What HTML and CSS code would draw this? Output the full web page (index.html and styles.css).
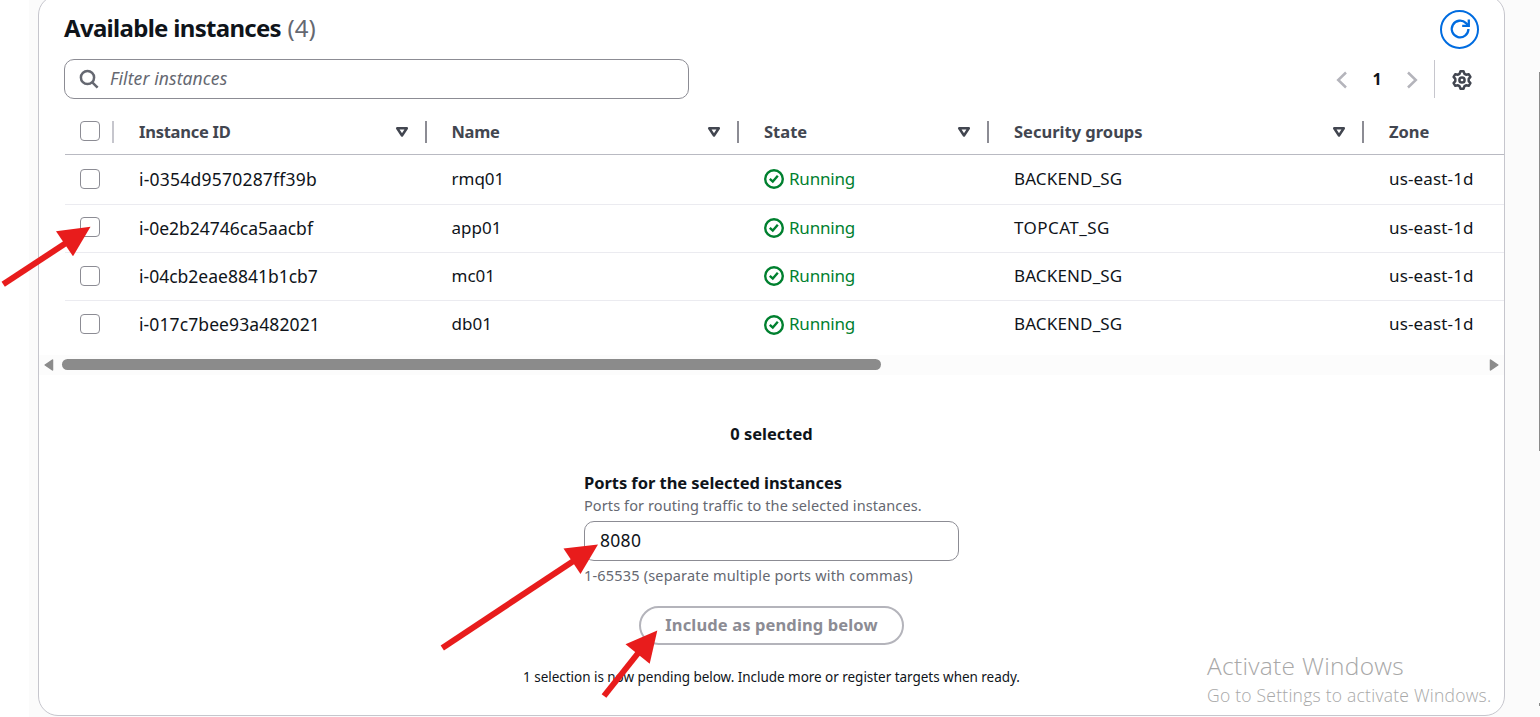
FILE: index.html
```html
<!DOCTYPE html>
<html lang="en">
<head>
<meta charset="utf-8">
<title>Available instances</title>
<link rel="stylesheet" href="styles.css">
</head>
<body>
<svg width="0" height="0" class="defs">
  <symbol id="sort" viewBox="0 0 14 12"><path d="M2.200 2.200h9.600L7 9.500z" fill="none" stroke="#424650" stroke-width="2.500" stroke-linejoin="round"/></symbol>
  <symbol id="ok" viewBox="0 0 20 20"><circle cx="10" cy="10" r="8.800" fill="none" stroke="#00802f" stroke-width="2.400"/><path d="M5.800 9.800l3 2.800 5-5.800" fill="none" stroke="#00802f" stroke-width="2.400"/></symbol>
</svg>
<div class="page">
  <main class="panel">
    <header class="head">
      <h2 class="title"><span class="title-text">Available instances</span> <span class="count">(4)</span></h2>
      <button class="refresh" aria-label="Refresh"><svg width="24" height="24" viewBox="0 0 24 24" fill="none" stroke="#006ce0" stroke-width="2.400"><path d="M21.300 11.500a8.700 8.700 0 1 1-2.500-6.100L21.500 8"/><path d="M21.700 1.500v6.700h-6.900"/></svg></button>
    </header>
    <div class="tools">
      <div class="filter">
        <svg width="20" height="20" viewBox="0 0 20 20" fill="none" stroke="#656871" stroke-width="2.500"><circle cx="8.500" cy="8.500" r="6.600"/><path d="M13.300 13.300l5.300 5.300"/></svg>
        <span class="placeholder">Filter instances</span>
      </div>
      <div class="pager">
        <svg width="12" height="18" viewBox="0 0 12 18" fill="none" stroke="#b4b4bb" stroke-width="2.500"><path d="M10 1.500L2.200 9l7.800 7.500"/></svg>
        <b class="pageno">1</b>
        <svg width="12" height="18" viewBox="0 0 12 18" fill="none" stroke="#b4b4bb" stroke-width="2.500"><path d="M2 1.500L9.800 9 2 16.500"/></svg>
      </div>
      <div class="prefs"><svg width="22" height="22" viewBox="0 0 22 22" fill="none" stroke="#424650" stroke-width="2.500" stroke-linejoin="round"><path d="M9.500 2.200h3l1 2.700 1.500.8 2.700-.5 1.700 2.700-1.700 2v2.200l1.700 2-1.700 2.700-2.700-.5-1.500.8-1 2.700h-3l-1-2.700-1.500-.8-2.700.5-1.700-2.700 1.700-2V9.900l-1.700-2 1.700-2.700 2.700.5 1.500-.8z"/><circle cx="11" cy="11" r="2.600"/></svg></div>
    </div>
    <div class="table">
      <div class="row header">
        <div class="cell check"><i class="box"></i></div>
        <div class="cell"><span class="h-id">Instance ID</span><svg class="sort"><use href="#sort"/></svg></div>
        <div class="cell"><span class="h-name">Name</span><svg class="sort"><use href="#sort"/></svg></div>
        <div class="cell"><span>State</span><svg class="sort"><use href="#sort"/></svg></div>
        <div class="cell"><span>Security groups</span><svg class="sort"><use href="#sort"/></svg></div>
        <div class="cell last"><span>Zone</span></div>
      </div>
      <div class="row first">
        <div class="cell check"><i class="box"></i></div><div class="cell id">i-0354d9570287ff39b</div><div class="cell">rmq01</div>
        <div class="cell state"><svg class="ok"><use href="#ok"/></svg>Running</div><div class="cell sg">BACKEND_SG</div><div class="cell zone">us-east-1d</div>
      </div>
      <div class="row second">
        <div class="cell check"><i class="box"></i></div><div class="cell id tight">i-0e2b24746ca5aacbf</div><div class="cell">app01</div>
        <div class="cell state"><svg class="ok"><use href="#ok"/></svg>Running</div><div class="cell sg wide">TOPCAT_SG</div><div class="cell zone">us-east-1d</div>
      </div>
      <div class="row">
        <div class="cell check"><i class="box"></i></div><div class="cell id tight">i-04cb2eae8841b1cb7</div><div class="cell">mc01</div>
        <div class="cell state"><svg class="ok"><use href="#ok"/></svg>Running</div><div class="cell sg">BACKEND_SG</div><div class="cell zone">us-east-1d</div>
      </div>
      <div class="row end">
        <div class="cell check"><i class="box"></i></div><div class="cell id snug">i-017c7bee93a482021</div><div class="cell">db01</div>
        <div class="cell state"><svg class="ok"><use href="#ok"/></svg>Running</div><div class="cell sg">BACKEND_SG</div><div class="cell zone">us-east-1d</div>
      </div>
    </div>
    <div class="scroll">
      <svg width="10" height="12" viewBox="0 0 10 12"><path d="M8.500 1v10L1.200 6z" fill="#8b8b8b" stroke="#8b8b8b" stroke-width="1.500" stroke-linejoin="round"/></svg>
      <div class="track"><div class="thumb"></div></div>
      <svg width="10" height="12" viewBox="0 0 10 12"><path d="M1.500 1v10l7.300-5z" fill="#8b8b8b" stroke="#8b8b8b" stroke-width="1.500" stroke-linejoin="round"/></svg>
    </div>
    <section class="pending">
      <div class="selected">0 selected</div>
      <div class="field">
        <label class="label"><span>Ports for the selected instances</span></label>
        <div class="desc">Ports for routing traffic to the selected instances.</div>
        <div class="input">8080</div>
        <div class="hint">1-65535 (separate multiple ports with commas)</div>
      </div>
      <button class="include"><span>Include as pending below</span></button>
      <div class="note">1 selection is now pending below. Include more or register targets when ready.</div>
    </section>
  </main>
</div>
<div class="watermark"><div class="wm-title">Activate Windows</div><div class="wm-sub">Go to Settings to activate Windows.</div></div>
<div class="page-thumb"></div>
<div class="page-arrow"></div>
<svg class="arrows" width="1540" height="717" viewBox="0 0 1540 717" fill="#e81c1c" stroke="#e81c1c">
  <path d="M3.200 284.300L66 243" stroke-width="6"/><path d="M90.500 226.700L56 231.300l17 25z" stroke="none"/>
  <path d="M442.300 648L575 560" stroke-width="6"/><path d="M598 544.500l-34.500 4 17 25.500z" stroke="none"/>
  <path d="M604 696L639 652" stroke-width="6"/><path d="M657.300 630.500l-31.800 13.800 24.200 19.500z" stroke="none"/>
</svg>
</body>
</html>
```
FILE: styles.css
```css
* { box-sizing: border-box; }
body {
  margin: 0; width: 1540px; height: 717px; overflow: hidden; background: #fff; color: #0f141a;
  font-family: "Noto Sans", "Open Sans", sans-serif; font-size: 17px;
}
.defs { position: absolute; }
.page { margin-left: 29px; height: 717px; background: #fbfbfb; padding-left: 9px; overflow: hidden; }
.panel { width: 1467px; height: 721px; margin-top: -5px; background: #fff; border: 1px solid #c6c6cd; border-radius: 20px; overflow: hidden; }
.head { display: flex; justify-content: space-between; align-items: center; height: 58px; padding: 8px 25px 0 25px; }
.title { margin: -2px 0 0; font-size: 24px; line-height: 32px; font-weight: 700; letter-spacing: -.7px; }
.count { font-weight: 400; color: #656871; margin-left: 1px; letter-spacing: 0; }
.refresh { width: 39px; height: 39px; border: 2px solid #006ce0; border-radius: 50%; background: #fff; padding: 0; display: flex; align-items: center; justify-content: center; }
.refresh svg { width: 23px; height: 23px; }
.tools { display: flex; align-items: center; padding: 5px 25px 0 25px; height: 45px; }
.filter { width: 625px; height: 40px; border: 1px solid #8c8c94; border-radius: 10px; display: flex; align-items: center; gap: 11px; padding: 0 0 1px 14px; }
.filter svg { margin-top: 1px; }
.placeholder { font-style: italic; color: #656871; font-size: 17.500px; letter-spacing: .1px; margin-top: -1px; }
.pager { margin-left: auto; display: flex; align-items: center; width: 98px; justify-content: space-between; padding: 1px 16px 0 0; }
.pageno { font-size: 16px; margin-top: -2px; }
.prefs { border-left: 1px solid #c6c6cd; height: 38px; width: 45px; display: flex; align-items: center; padding: 2px 0 0 16px; }
.table { margin-left: 26px; width: 1439px; }
.row { display: grid; grid-template-columns: 49px 312.500px 312.500px 250px 375px 1fr; height: 48px; border-bottom: 1px solid #ebebf0; }
.cell { display: flex; align-items: center; padding: 0 0 2px 25px; white-space: nowrap; line-height: 24px; }
.header { height: 56px; border-bottom-color: #b9bac2; padding-top: 9px; color: #424650; font-weight: 700; font-size: 16.500px; }
.header .cell { position: relative; justify-content: space-between; padding: 1px 18px 0 25px; }
.header .cell::after { content: ""; position: absolute; right: 0; top: 13px; height: 22px; width: 2px; background: #8c8c94; }
.header .check::after { background: #c6c6cd; }
.header .last::after { display: none; }
.h-id { letter-spacing: -.25px; }
.h-name { letter-spacing: -.3px; }
.sort { width: 14px; height: 12px; }
.first { height: 50px; }
.end { height: 54px; border: 0; padding-bottom: 6px; }
.row .check { padding: 0 0 2px 15px; }
.header .check { padding-bottom: 1px; }
.second .check { padding-bottom: 3px; }
.box { width: 20px; height: 20px; border: 1px solid #8c8c94; border-radius: 4px; }
.id { font-size: 17.500px; letter-spacing: .22px; }
.tight { letter-spacing: 0; }
.snug { letter-spacing: .1px; }
.sg { letter-spacing: .15px; }
.wide { letter-spacing: .45px; }
.zone { letter-spacing: .15px; }
.state { color: #00802f; gap: 5px; letter-spacing: -.2px; }
.ok { width: 20px; height: 20px; margin-top: 1px; }
.scroll { height: 20px; background: #fcfcfc; display: flex; align-items: center; padding: 0 5px 1px; gap: 8px; }
.track { flex: 1; }
.thumb { width: 819px; height: 11px; border-radius: 6px; background: #8b8b8b; }
.pending { display: flex; flex-direction: column; align-items: center; padding-top: 46px; }
.selected { font-weight: 700; line-height: 26px; font-size: 16.500px; }
.field { width: 375px; margin-top: 24px; white-space: nowrap; }
.label { display: block; font-weight: 700; line-height: 23px; font-size: 16.500px; letter-spacing: -.05px; }
.desc, .hint { font-size: 14.500px; line-height: 20px; color: #656871; letter-spacing: .1px; }
.desc { margin: 1px 0 6px; }
.input { height: 40px; border: 1px solid #8c8c94; border-radius: 10px; line-height: 37px; padding-left: 15px; font-size: 17.500px; letter-spacing: .3px; }
.hint { margin-top: 4px; letter-spacing: .18px; }
.include { margin-top: 21px; width: 265px; height: 39px; border: 2px solid #b4b4bb; border-radius: 20px; background: #fff; color: #8c8c94; font: 700 16.500px "Noto Sans", sans-serif; padding: 0 0 2px; white-space: nowrap; letter-spacing: .12px; }
.note { font-size: 13.500px; line-height: 20px; margin-top: 22px; white-space: nowrap; letter-spacing: -.035px; }
.watermark { position: absolute; left: 1207px; top: 649px; color: #a8a8a8; font-family: "Open Sans", sans-serif; font-weight: 300; white-space: nowrap; }
.wm-title { font-size: 24.500px; line-height: 33px; letter-spacing: .3px; }
.wm-sub { font-size: 17.500px; line-height: 26px; letter-spacing: .24px; }
.page-thumb { position: absolute; left: 1539px; top: 72px; width: 1px; height: 379px; background: #8b8b8b; }
.page-arrow { position: absolute; left: 1539px; top: 703px; width: 1px; height: 3px; background: #8b8b8b; }
.arrows { position: absolute; left: 0; top: 0; }
```
